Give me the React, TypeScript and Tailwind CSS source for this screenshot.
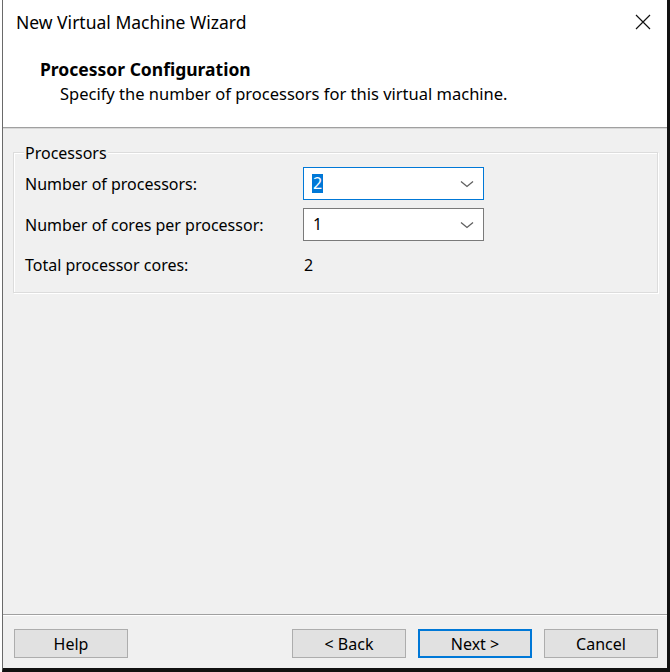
const font = { fontFamily: '"Segoe UI", "Noto Sans", "Open Sans", sans-serif' };

function Combo({ value, focused }: { value: string; focused?: boolean }) {
  return (
    <div
      className={`flex h-[33px] w-[181px] items-center justify-between bg-white pl-[8px] pr-[8px] ${
        focused ? "border border-[#0078d7]" : "border border-[#7a7a7a]"
      }`}
    >
      {focused ? (
        <span className="bg-[#0078d7] px-[1px] leading-[19px] text-white">{value}</span>
      ) : (
        <span className="px-[1px] leading-[19px] text-black">{value}</span>
      )}
      <svg width="14" height="8" viewBox="0 0 14 8" className="mr-[1px]">
        <path d="M1 1.5 L7 6.5 L13 1.5" fill="none" stroke="#5f5f5f" strokeWidth="1.3" />
      </svg>
    </div>
  );
}

function WizardButton({ label, isDefault }: { label: string; isDefault?: boolean }) {
  return (
    <button
      className={`flex h-[29px] w-[114px] items-center justify-center bg-[#e1e1e1] text-[16px] text-black ${
        isDefault ? "border-2 border-[#0078d7]" : "border border-[#adadad]"
      }`}
    >
      {label}
    </button>
  );
}

export default function App() {
  return (
    <div className="h-[672px] w-[670px] bg-white pl-[2px]" style={font}>
      <div className="flex h-full flex-col border-b-[4px] border-l border-r-[3px] border-b-[#111] border-l-[#6a6a6a] border-r-[#111]">
        {/* Title + header */}
        <div className="bg-white">
          <div className="flex h-[44px] items-center justify-between pl-[13px] pr-[16px]">
            <span className="text-[17.5px] text-black">New Virtual Machine Wizard</span>
            <svg width="16" height="16" viewBox="0 0 16 16">
              <path d="M1 1 L15 15 M15 1 L1 15" stroke="#111" strokeWidth="1.2" />
            </svg>
          </div>
          <div className="h-[83px] pl-[37px] pt-[14px]">
            <div className="text-[17.5px] font-bold leading-[22px] text-black">Processor Configuration</div>
            <div className="mt-[3px] pl-[20px] text-[16.5px] leading-[22px] text-black">
              Specify the number of processors for this virtual machine.
            </div>
          </div>
          <div className="h-[2px] border-t border-b border-t-[#a0a0a0] border-b-[#d8d8d8]" />
        </div>

        {/* Body */}
        <div className="flex flex-1 flex-col bg-[#f0f0f0]">
          {/* Group box */}
          <div className="relative ml-[10px] mr-[9px] mt-[23px] h-[141px] border border-[#dcdcdc] pl-[11px] pt-[14px] shadow-[inset_1px_1px_0_#fff,1px_1px_0_#fff]">
            <span className="absolute left-[10px] top-[-10px] bg-[#f0f0f0] px-[1px] text-[16px] leading-[20px] text-black">
              Processors
            </span>
            <div className="grid grid-cols-[278px_181px] items-center gap-y-[8px] text-[16px] text-black">
              <span>Number of processors:</span>
              <Combo value="2" focused />
              <span>Number of cores per processor:</span>
              <Combo value="1" />
              <span className="mt-[4px]">Total processor cores:</span>
              <span className="mt-[4px] pl-[1px]">2</span>
            </div>
          </div>

          <div className="mt-auto">
            <div className="h-[2px] border-t border-b border-t-[#a0a0a0] border-b-white" />
            <div className="flex h-[52px] items-start pl-[11px] pr-[9px] pt-[13px]">
              <WizardButton label="Help" />
              <div className="ml-auto flex gap-[12px]">
                <WizardButton label="< Back" />
                <WizardButton label="Next >" isDefault />
                <WizardButton label="Cancel" />
              </div>
            </div>
          </div>
        </div>
      </div>
    </div>
  );
}
